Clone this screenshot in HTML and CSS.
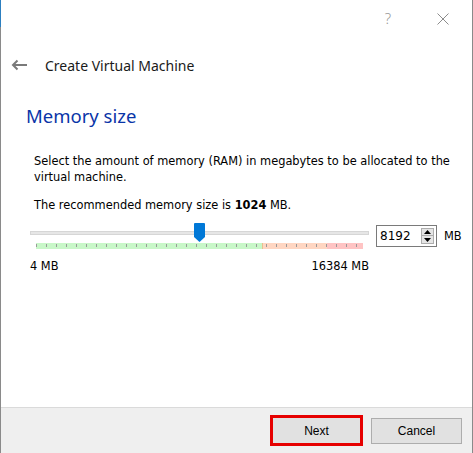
FILE: index.html
```html
<!DOCTYPE html>
<html>
<head>
<meta charset="utf-8">
<link rel="stylesheet" href="styles.css">
</head>
<body>
<div class="window">
  <div class="titlebar">
    <span class="help">?</span>
    <svg class="close" width="12" height="12" viewBox="0 0 12 12"><path d="M0.5 0.5 L11.5 11.5 M11.5 0.5 L0.5 11.5" stroke="#8c8c8c" stroke-width="1" fill="none"/></svg>
  </div>
  <div class="header">
    <svg class="back" width="16" height="12" viewBox="0 0 16 12"><path d="M16 6 H2.5 M6.5 1.5 L2 6 L6.5 10.5" stroke="#7a7a7a" stroke-width="2" fill="none"/></svg>
    <span class="title">Create Virtual Machine</span>
  </div>
  <div class="content">
    <h1 class="heading">Memory size</h1>
    <div class="body">
      <p class="desc">Select the amount of memory (RAM) in megabytes to be allocated to the virtual machine.</p>
      <p class="rec">The recommended memory size is <b>1024</b> MB.</p>
      <div class="slider-row">
        <div class="slider">
          <div class="groove"></div>
          <div class="handle"><svg width="11" height="19" viewBox="0 0 11 19"><path d="M0 1 Q0 0 1 0 H10 Q11 0 11 1 V14 L5.5 19 L0 14 Z" fill="#0078d7"/></svg></div>
          <div class="band">
            <div class="zone green"></div>
            <div class="zone peach"></div>
            <div class="zone pink"></div>
            <div class="ticks"></div>
          </div>
        </div>
        <div class="spin">
          <span class="spin-value">8192</span>
          <div class="spin-btns">
            <div class="spin-btn"><svg width="7" height="4" viewBox="0 0 7 4"><path d="M0 4 L3.5 0 L7 4 Z" fill="#000"/></svg></div>
            <div class="spin-btn"><svg width="7" height="4" viewBox="0 0 7 4"><path d="M0 0 L3.5 4 L7 0 Z" fill="#000"/></svg></div>
          </div>
        </div>
        <span class="unit">MB</span>
      </div>
      <div class="range-labels">
        <span>4 MB</span>
        <span>16384 MB</span>
      </div>
    </div>
  </div>
  <div class="footer">
    <button class="btn next">Next</button>
    <button class="btn cancel">Cancel</button>
  </div>
</div>
</body>
</html>
```

FILE: styles.css
```css
html, body {
  margin: 0;
  padding: 0;
  background: #ffffff;
}
.window {
  position: relative;
  width: 473px;
  height: 453px;
  box-sizing: border-box;
  border-left: 1px solid #8a8a8a;
  border-right: 1px solid #8a8a8a;
  display: flex;
  flex-direction: column;
  background: #ffffff;
  font-family: "DejaVu Sans", Verdana, sans-serif;
  color: #000;
}
.window::before {
  content: "";
  position: absolute;
  left: -1px;
  top: 0;
  width: 1px;
  height: 27px;
  background: #2c7fc0;
}
.titlebar {
  height: 40px;
  display: flex;
  align-items: center;
  justify-content: flex-end;
  padding-right: 23px;
  gap: 46px;
}
.help {
  font-family: "Noto Sans", sans-serif;
  font-size: 15px;
  font-weight: 300;
  color: #999;
  margin-top: -5px;
}
.close {
  display: block;
  margin-top: -2px;
}
.header {
  height: 52px;
  display: flex;
  align-items: center;
  padding-left: 10px;
  margin-top: -1px;
}
.back {
  display: block;
}
.title {
  margin-left: 18px;
  font-family: "Noto Sans", sans-serif;
  font-size: 14px;
  color: #1a1a1a;
}
.content {
  flex: 1;
  padding-left: 25px;
}
.heading {
  margin: 12px 0 0 0;
  font-family: "Noto Sans", sans-serif;
  font-weight: 400;
  font-size: 18.5px;
  color: #0a35a8;
  line-height: 26px;
}
.body {
  padding-left: 8px;
  padding-top: 24px;
  font-size: 11.4px;
}
.desc {
  margin: 0;
  line-height: 16px;
  width: 432px;
}
.rec {
  margin: 12px 0 0 0;
  line-height: 16px;
}
.slider-row {
  display: flex;
  align-items: flex-start;
  margin-top: 7px;
  margin-left: -4px;
}
.slider {
  position: relative;
  width: 339px;
  height: 29px;
}
.groove {
  position: absolute;
  left: 0;
  right: 0;
  top: 11px;
  height: 4px;
  background: #e6e6e6;
  border: 1px solid #d6d6d6;
  box-sizing: border-box;
}
.handle {
  position: absolute;
  left: 164px;
  top: 3px;
  line-height: 0;
}
.band {
  position: absolute;
  left: 6px;
  top: 23px;
  width: 327px;
  height: 6px;
  display: flex;
}
.zone { height: 100%; }
.green { width: 226px; background: #c8f7c8; border-right: 1px solid #e8c090; }
.peach { width: 64px; background: #ffd6c2; }
.pink { width: 36px; background: #ffc4c4; }
.ticks {
  position: absolute;
  left: 0;
  top: 1px;
  width: 100%;
  height: 3px;
  background: repeating-linear-gradient(to right, #9a9a9a 0, #9a9a9a 1px, transparent 1px, transparent 10px);
}
.spin {
  margin-left: 7px;
  margin-top: 5px;
  width: 61px;
  height: 22px;
  box-sizing: border-box;
  border: 1px solid #7a7a7a;
  display: flex;
  align-items: center;
  justify-content: space-between;
  padding: 0 2px 0 3px;
  background: #fff;
}
.spin-value {
  font-size: 12px;
}
.spin-btns {
  display: flex;
  flex-direction: column;
  gap: 0;
}
.spin-btn {
  width: 13px;
  height: 8px;
  background: #e5e5e5;
  border: 1px solid #adadad;
  box-sizing: border-box;
  display: flex;
  align-items: center;
  justify-content: center;
  line-height: 0;
}
.spin-btn + .spin-btn { border-top: none; height: 8px; }
.unit {
  margin-left: 7px;
  margin-top: 9px;
}
.range-labels {
  display: flex;
  justify-content: space-between;
  width: 339px;
  margin-left: -4px;
  margin-top: 10px;
}
.footer {
  height: 46px;
  box-sizing: border-box;
  border-top: 1px solid #dadada;
  background: #efefef;
  display: flex;
  align-items: center;
  justify-content: flex-end;
  padding-right: 10px;
  gap: 8px;
}
.btn {
  font-family: "Liberation Sans", Arial, sans-serif;
  font-size: 12px;
  color: #000;
  background: #e1e1e1;
  border: 1px solid #adadad;
  width: 91px;
  height: 26px;
  margin: 0;
  padding: 0;
}
.next {
  border: 3px solid #e60000;
  width: 93px;
  height: 31px;
}
.cancel {
  margin-top: 0;
}
```
